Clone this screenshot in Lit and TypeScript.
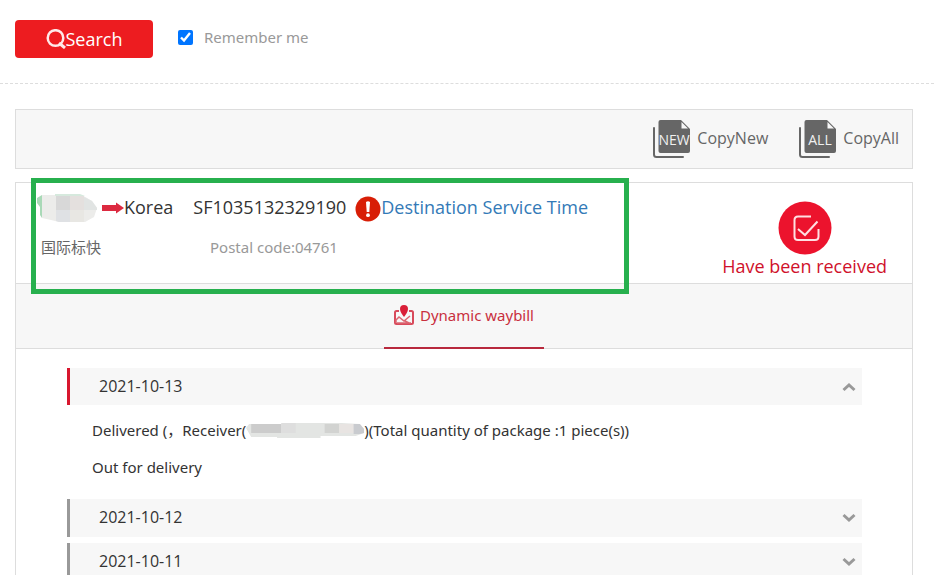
import { LitElement, html, css, svg } from "lit";
import { customElement, property, state } from "lit/decorators.js";
import { classMap } from "lit/directives/class-map.js";

interface Day {
  date: string;
  open: boolean;
  events: unknown[];
}

@customElement("sheet-icon")
class SheetIcon extends LitElement {
  @property() label = "";

  static styles = css`
    :host { display: block; width: 38px; height: 38px; }
    svg { display: block; }
    text { font: 14px "Open Sans", "Noto Sans", sans-serif; fill: #f0f0f0; }
  `;

  render() {
    return html`<svg width="38" height="38" viewBox="0 0 38 38" aria-hidden="true">
      <path d="M1 8V34.500Q1 37 3.500 37H30" fill="none" stroke="#666" stroke-width="2" stroke-linecap="round"/>
      <path d="M7.500 0H28L37 9V31Q37 33 35 33H7.500Q5.500 33 5.500 31V2Q5.500 0 7.500 0Z" fill="#666"/>
      <path d="M28.500 2V8.500H35Z" fill="#f7f7f7"/>
      ${svg`<text x="21" y="25" text-anchor="middle">${this.label}</text>`}
    </svg>`;
  }
}

@customElement("app-root")
export class AppRoot extends LitElement {
  @state() private days: Day[] = [
    {
      date: "2021-10-13",
      open: true,
      events: [
        html`Delivered (，Receiver(<svg class="masked" width="118" height="18" viewBox="0 0 114 18" preserveAspectRatio="none" aria-hidden="true">
            <path fill="#e3e5e3" d="M0 7L3 3L7 3H35L42 2H92L110 3L114 8V12L106 15H72V17H30V16H5Z"/>
            <path fill="#cccccc" d="M5 3H34V12H5Z"/><path fill="#dedede" d="M34 2H48V12H34Z"/>
            <path fill="#d2d3d1" d="M76 3H90V12H76Z"/><path fill="#e8e4e2" d="M90 3H104V12H90Z"/>
            <path fill="#c9cbcf" d="M104 3L110 3L114 8V12L110 13H104Z"/>
          </svg>)(Total quantity of package :1 piece(s))`,
        html`Out for delivery`,
      ],
    },
    { date: "2021-10-12", open: false, events: [] },
    { date: "2021-10-11", open: false, events: [] },
  ];

  static styles = css`
    :host {
      display: block;
      min-height: 100vh;
      background: #fff;
      color: #333;
      font: 15px/20px "Noto Sans", "Open Sans", "Noto Sans CJK SC", sans-serif;
    }
    * { box-sizing: border-box; }
    button { font: inherit; color: inherit; border: 0; background: none; padding: 0; margin: 0; cursor: pointer; }
    a { text-decoration: none; }
    svg { display: block; flex: none; }
    .search-bar {
      display: flex;
      align-items: center;
      gap: 25px;
      padding: 20px 15px 25px;
      border-bottom: 1px dashed #ddd;
    }
    .search, .copy, .route, .status, .day { font-family: "Open Sans", "Noto Sans", sans-serif; }
    .search {
      display: flex;
      align-items: center;
      justify-content: center;
      width: 138px;
      height: 38px;
      border-radius: 4px;
      background: #ed1c20;
      color: #fff;
      font-size: 18px;
    }
    .remember { display: flex; align-items: center; gap: 11px; color: #999; padding-bottom: 3px; }
    .remember input { width: 15px; height: 15px; margin: 0; accent-color: #0075ff; }
    .remember span, .copy span, .day span { padding-bottom: 2px; }
    .content { padding: 25px 21px 0 15px; }
    .toolbar {
      display: flex;
      justify-content: flex-end;
      gap: 31px;
      padding: 10px 13px;
      border: 1px solid #ddd;
      background: #f7f7f7;
      color: #666;
    }
    .copy { display: flex; align-items: center; gap: 6px; font-size: 16px; }
    .waybill { margin-top: 13px; border: 1px solid #ddd; }
    .summary {
      position: relative;
      display: flex;
      justify-content: space-between;
      height: 101px;
      border-bottom: 1px solid #ddd;
    }
    .highlight {
      position: absolute;
      left: 15px;
      top: -5px;
      width: 598px;
      height: 116px;
      border: 5px solid #27b04e;
      pointer-events: none;
    }
    .details { padding: 10px 0 0 21px; }
    .route { display: flex; align-items: center; height: 30px; font-size: 18px; }
    .route span { padding-bottom: 2px; }
    .arrow { margin: 0 0 0 5px; }
    .number { margin: 0 9px 0 20px; }
    .service { display: flex; align-items: center; color: #337ab7; }
    .meta { display: grid; grid-template-columns: 169px auto; padding: 14px 0 0 4px; color: #999; }
    .product { color: #666; }
    .status {
      display: flex;
      flex-direction: column;
      align-items: center;
      padding: 18px 25px 0 0;
      font-size: 18px;
      line-height: 22px;
      color: #d0112b;
    }
    .tabs { display: flex; justify-content: center; height: 65px; border-bottom: 1px solid #ddd; background: #f7f7f7; }
    .tab {
      display: flex;
      align-items: flex-start;
      gap: 6px;
      height: 65px;
      padding: 21px 10px 0;
      border-bottom: 2px solid #b8293d;
      color: #c9303e;
    }
    .days { padding: 19px 50px 0 51px; }
    .day {
      display: flex;
      align-items: center;
      justify-content: space-between;
      width: 100%;
      height: 38px;
      margin-bottom: 6px;
      padding: 0 6px 0 29px;
      border-left: 3px solid #999;
      background: #f7f7f7;
      font-size: 16px;
    }
    .day.open { height: 37px; margin: 0; border-left-color: #d8172f; }
    .open .chevron { transform: rotate(180deg); }
    .events { margin: 0; padding: 6px 0 14px 25px; list-style: none; }
    .event { display: flex; align-items: center; height: 37px; white-space: pre; }
  `;

  private toggle(day: Day) {
    this.days = this.days.map((d) => (d === day ? { ...d, open: !d.open } : d));
  }

  private renderDay(day: Day) {
    return html`
      <button class=${classMap({ day: true, open: day.open })} aria-expanded=${day.open} @click=${() => this.toggle(day)}>
        <span>${day.date}</span>
        <svg class="chevron" width="14" height="10" viewBox="0 0 14 10" aria-hidden="true">
          <path d="M1.500 2L7 7L12.500 2" fill="none" stroke="#999" stroke-width="3"/>
        </svg>
      </button>
      ${day.open ? html`<ul class="events">${day.events.map((e) => html`<li class="event">${e}</li>`)}</ul>` : ""}
    `;
  }

  render() {
    return html`
      <form class="search-bar" @submit=${(e: Event) => e.preventDefault()}>
        <button class="search">
          <svg width="20" height="20" viewBox="0 0 20 20" aria-hidden="true">
            <circle cx="9.500" cy="9" r="7.800" fill="none" stroke="#ffe9e9" stroke-width="2.500"/>
            <path d="M13 14L19 19" stroke="#ffe9e9" stroke-width="3"/>
          </svg>
          <span>Search</span>
        </button>
        <label class="remember"><input type="checkbox" checked /><span>Remember me</span></label>
      </form>
      <main class="content">
        <div class="toolbar">
          <button class="copy"><sheet-icon label="NEW"></sheet-icon><span>CopyNew</span></button>
          <button class="copy"><sheet-icon label="ALL"></sheet-icon><span>CopyAll</span></button>
        </div>
        <section class="waybill">
          <div class="summary">
            <div class="details">
              <div class="route">
                <svg width="60" height="28" viewBox="0 0 60 28" aria-hidden="true">
                  <path d="M0 4L5 1V24L3 21V13L0 9Z" fill="#a9d9b7"/>
                  <path d="M5 1H45L55 7L60 14L57 23L48 28H22L14 26L5 24Z" fill="#ececea"/>
                  <path d="M18 0H43L48 2H18Z" fill="#d6e9dd"/>
                  <path d="M19 2H33V16H19Z" fill="#d8d8d8"/><path d="M33 2H47V16H33Z" fill="#e4e0de"/>
                  <path d="M19 16H33V28H22L19 27Z" fill="#dfe1e4"/><path d="M33 16H47V28H33Z" fill="#e8e7e3"/>
                  <path d="M47 3L55 7L60 14V16H47Z" fill="#e1e4e3"/>
                </svg>
                <svg class="arrow" width="22" height="12" viewBox="0 0 22 12" role="img" aria-label="to">
                  <path d="M0 3H14V.5L22 6L14 11.500V9H0Z" fill="#dc2a40"/>
                </svg>
                <span>Korea</span>
                <span class="number">SF1035132329190</span>
                <a class="service" href="#service-time">
                  <svg width="26" height="28" viewBox="0 0 26 28" aria-hidden="true">
                    <circle cx="13" cy="15" r="12.500" fill="#d81e06"/>
                    <path d="M11 8Q13 6.500 15 8L14.300 18H11.700Z" fill="#fff"/>
                    <circle cx="13" cy="21.200" r="1.900" fill="#fff"/>
                  </svg>
                  <span>Destination Service Time</span>
                </a>
              </div>
              <div class="meta"><span class="product">国际标快</span><span>Postal code:04761</span></div>
            </div>
            <div class="status">
              <svg width="54" height="54" viewBox="0 0 54 54" aria-hidden="true">
                <circle cx="27" cy="27" r="26.500" fill="#ec132d"/>
                <path d="M33 15.500H20Q16.500 15.500 16.500 19V35.500Q16.500 39 20 39H37Q40.500 39 40.500 35.500V28M20 28L27 34L39.500 20.500" fill="none" stroke="#ffdfe2" stroke-width="2"/>
              </svg>
              <span>Have been received</span>
            </div>
            <div class="highlight"></div>
          </div>
          <nav class="tabs">
            <button class="tab">
              <svg width="20" height="20" viewBox="0 0 20 20" aria-hidden="true">
                <path d="M5 6H2.500Q1 6 1 7.500V17.500Q1 19 2.500 19H17.500Q19 19 19 17.500V7.500Q19 6 17.500 6H15" fill="none" stroke="#d84a5b" stroke-width="2"/>
                <path d="M2 18V15L5 12L10 16L16 11M11 16L15 18M3 18H17" fill="none" stroke="#dc6672" stroke-width="1.500"/>
                <path d="M10 12C8 9 6 7 6 4A4 4 0 0 1 14 4C14 7 12 9 10 12Z" fill="#d91f38"/>
              </svg>
              <span>Dynamic waybill</span>
            </button>
          </nav>
          <div class="days">${this.days.map((d) => this.renderDay(d))}</div>
        </section>
      </main>
    `;
  }
}
